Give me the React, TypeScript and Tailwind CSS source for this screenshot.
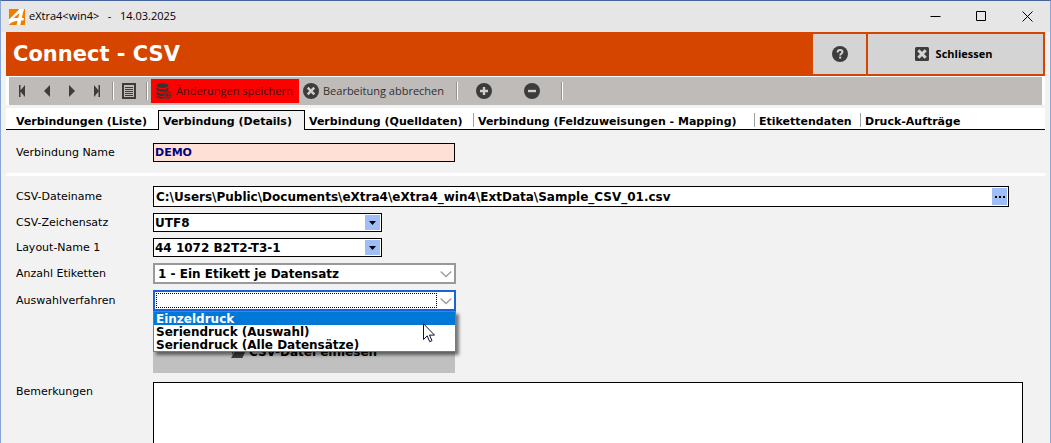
import React, { useState } from 'react';

type ToolButtonProps = {
  label: string;
  className?: string;
  children: React.ReactNode;
};

type FormRowProps = {
  id: string;
  label: string;
  className?: string;
  children: React.ReactNode;
};

const TABS = [
  { name: 'Verbindungen (Liste)', width: 'w-[152px] pl-[10px]' },
  { name: 'Verbindung (Details)', width: 'w-[147px] pl-1' },
  { name: 'Verbindung (Quelldaten)', width: 'w-[169px] pl-1' },
  { name: 'Verbindung (Feldzuweisungen - Mapping)', width: 'w-[281px] pl-1' },
  { name: 'Etikettendaten', width: 'w-[106px] pl-1' },
  { name: 'Druck-Aufträge', width: 'w-[110px] pl-1' },
];

const METHODS = ['Einzeldruck', 'Seriendruck (Auswahl)', 'Seriendruck (Alle Datensätze)'];

// Toolbar pieces
const ToolButton: React.FC<ToolButtonProps> = ({ label, className = '', children }) => (
  <button type="button" aria-label={label} className={`flex h-6 items-center justify-center ${className}`}>
    {children}
  </button>
);

const Separator = () => <div className="h-[18px] w-[2px] border-l border-r border-l-[#969290] border-r-white" />;

const RoundIcon: React.FC<{ d: string }> = ({ d }) => (
  <svg className="h-4 w-4 shrink-0" viewBox="0 0 16 16" fill="none">
    <circle cx="8" cy="8" r="8" fill="#3c3c3c" />
    <path d={d} stroke="#d0cdcb" strokeWidth="2.4" />
  </svg>
);

const DatabaseIcon = () => (
  <svg className="h-4 w-4 shrink-0" viewBox="0 0 16 16" fill="#3c3030">
    <ellipse cx="6.5" cy="2.6" rx="6" ry="2.4" />
    <path d="M.5 4.2c1.2 1.5 3.5 2 6 2s4.8-.5 6-2v2.4c-.6 1.5-3 2.4-6 2.4s-5.4-.9-6-2.4z" />
    <path d="M.5 8.4c1.2 1.3 3.3 1.8 6 1.8h1.3a5 5 0 0 0-.6 2.9c-3.7.1-6.3-.8-6.7-2.3z" />
    <path d="M.5 12.2c1.2 1 3.7 1.7 6.8 1.6.2.7.5 1.3 1 1.8-4.2.5-7.5-.5-7.8-2z" />
    <circle cx="11.5" cy="12" r="3.5" fill="#f00000" stroke="#3c3030" />
    <path d="M11.5 9.9v4.2M9.4 12h4.2" stroke="#3c3030" strokeWidth="1.2" />
  </svg>
);

const Chevron = () => (
  <svg className="pointer-events-none absolute right-[2px] top-[5px] h-2 w-3" viewBox="0 0 12 8" fill="none">
    <path d="M.7 1.5 6 6.5 11.3 1.5" stroke="#9a9a9a" strokeWidth="1.3" />
  </svg>
);

const ArrowBox = () => (
  <span className="pointer-events-none absolute right-px top-px flex h-[15px] w-[15px] items-center justify-center bg-[#9fbef7]">
    <svg className="h-1 w-[7px]" viewBox="0 0 7 4">
      <path d="M0 0h7L3.5 4z" />
    </svg>
  </span>
);

const FormRow: React.FC<FormRowProps> = ({ id, label, className = 'items-center', children }) => (
  <div className={`flex ${className}`}>
    <label htmlFor={id} className="w-[137px] shrink-0 leading-[14px]">
      {label}
    </label>
    {children}
  </div>
);

const TitleBar = () => (
  <div className="flex h-[31px] items-center bg-[#e6e6e6] pl-2 font-['Open_Sans','Noto_Sans',sans-serif] text-[11px]">
    <svg className="h-4 w-4" viewBox="0 0 16 16">
      <path d="M0 0h16v16H0z" fill="#f07d00" />
      <path
        d="M10.5 0H15l-2.2 9H15l-.6 2.6h-2.2L11.2 16H7.5l1-4.2C5 12 2.5 13.5 0 15.5v-5zM9.2 9l1.3-5L4.6 9z"
        fill="#fff"
        fillRule="evenodd"
      />
    </svg>
    <span className="ml-1 flex-1 whitespace-pre">{'eXtra4<win4>   -   14.03.2025'}</span>
    <button type="button" aria-label="Minimieren" className="flex h-full w-[46px] items-center justify-center">
      <svg className="h-[11px] w-[11px]" viewBox="0 0 11 11">
        <path d="M.5 5.5h10" stroke="#000" />
      </svg>
    </button>
    <button type="button" aria-label="Maximieren" className="flex h-full w-[46px] items-center justify-center">
      <svg className="h-[11px] w-[11px]" viewBox="0 0 11 11">
        <path d="M.5.5h9v9h-9z" fill="none" stroke="#000" />
      </svg>
    </button>
    <button type="button" aria-label="Fenster schliessen" className="flex h-full w-[46px] items-center justify-center">
      <svg className="h-[11px] w-[11px]" viewBox="0 0 11 11">
        <path d="m.5.5 10 10m0-10-10 10" stroke="#000" />
      </svg>
    </button>
  </div>
);

const Header = () => (
  <header className="flex h-11 gap-[2px] bg-[#d64500] p-[2px] pl-[7px]">
    <h1 className="flex-1 text-[21px] font-bold leading-[40px] text-white">Connect - CSV</h1>
    <button type="button" aria-label="Hilfe" className="flex w-[53px] items-center justify-center bg-[#d4d4d4]">
      <svg className="h-4 w-4" viewBox="0 0 16 16" fill="none">
        <circle cx="8" cy="8" r="8" fill="#3c3c3c" />
        <path d="M5.6 6.4C5.6 4.8 6.6 4 8 4s2.5.8 2.5 2.1C10.5 7.6 8.2 7.7 8.2 9.6" stroke="#d4d4d4" strokeWidth="1.9" />
        <path d="M7.2 10.6h2v2h-2z" fill="#d4d4d4" />
      </svg>
    </button>
    <button
      type="button"
      className="flex w-[175px] items-center justify-center gap-[7px] bg-[#d4d4d4] pr-1 font-['Open_Sans','Noto_Sans',sans-serif] text-[11px] font-bold"
    >
      <svg className="h-[14px] w-[14px]" viewBox="0 0 14 14">
        <rect width="14" height="14" rx="1.5" fill="#3c3c3c" />
        <path d="m3.3 3.3 7.4 7.4m0-7.4-7.4 7.4" stroke="#d4d4d4" strokeWidth="3" />
      </svg>
      Schliessen
    </button>
  </header>
);

const Toolbar = () => (
  <div className="border-x-[3px] border-t border-white">
    <div className="flex h-7 items-center bg-[#bfbbb8] font-['Open_Sans','Noto_Sans',sans-serif] text-[11px] text-[#303030]">
      <ToolButton label="Erster Datensatz" className="w-[25px]">
        <svg className="h-3 w-2" viewBox="0 0 8 12" fill="#3c3c3c">
          <path d="M1 0h1.5v12H1zM7 0v12L2 6z" />
        </svg>
      </ToolButton>
      <ToolButton label="Vorheriger Datensatz" className="w-[25px]">
        <svg className="h-3 w-2" viewBox="0 0 8 12" fill="#3c3c3c">
          <path d="M7 0v12L1 6z" />
        </svg>
      </ToolButton>
      <ToolButton label="Nächster Datensatz" className="w-[25px]">
        <svg className="h-3 w-2" viewBox="0 0 8 12" fill="#3c3c3c">
          <path d="M1 0v12l6-6z" />
        </svg>
      </ToolButton>
      <ToolButton label="Letzter Datensatz" className="w-[25px]">
        <svg className="h-3 w-2" viewBox="0 0 8 12" fill="#3c3c3c">
          <path d="M5.5 0H7v12H5.500zM1 0v12l5-6z" />
        </svg>
      </ToolButton>
      <div className="w-[3px]" />
      <Separator />
      <ToolButton label="Liste" className="mr-[2px] w-[30px]">
        <svg className="h-4 w-[14px]" viewBox="0 0 14 16" fill="none" stroke="#3c3c3c">
          <path d="M1 1h12v14H1z" strokeWidth="2" />
          <path d="M3 4.5h8M3 6.5h8M3 8.5h8M3 10.5h8M3 12.5h8" />
        </svg>
      </ToolButton>
      <Separator />
      <button type="button" className="ml-[3px] flex h-6 w-[148px] items-center gap-1 bg-[#ff0000] pl-[5px] whitespace-nowrap text-[#401414]">
        <DatabaseIcon />
        Änderungen speichern
      </button>
      <button type="button" className="flex h-6 w-[157px] items-center gap-1 pl-1 whitespace-nowrap">
        <RoundIcon d="m4.7 4.7 6.6 6.6m0-6.6-6.6 6.6" />
        Bearbeitung abbrechen
      </button>
      <Separator />
      <ToolButton label="Hinzufügen" className="ml-[2px] w-12">
        <RoundIcon d="M8 4v8M4 8h8" />
      </ToolButton>
      <ToolButton label="Entfernen" className="mr-[5px] w-12">
        <RoundIcon d="M4 8h8" />
      </ToolButton>
      <Separator />
    </div>
  </div>
);

const App: React.FC = () => {
  const [activeTab, setActiveTab] = useState(1);
  const [name, setName] = useState('DEMO');
  const [fileName, setFileName] = useState('C:\\Users\\Public\\Documents\\eXtra4\\eXtra4_win4\\ExtData\\Sample_CSV_01.csv');
  const [method, setMethod] = useState('');
  const [listOpen, setListOpen] = useState(true);
  const [highlighted, setHighlighted] = useState(0);

  const chooseMethod = (value: string) => {
    setMethod(value);
    setListOpen(false);
  };

  return (
    <div className="h-screen overflow-hidden border-x border-t border-x-[#8aa6d9] border-t-[#46659c] bg-[#f2f2f2] font-['Verdana','DejaVu_Sans',sans-serif] text-[11px] text-black">
      <TitleBar />
      <div className="mx-[5px]">
        <Header />
        <Toolbar />

        <div role="tablist" className="mt-[3px] flex h-[22px] items-end bg-white font-bold">
          {TABS.map((tab, i) => (
            <button
              key={tab.name}
              type="button"
              role="tab"
              aria-selected={i === activeTab}
              onClick={() => setActiveTab(i)}
              className={`h-5 shrink-0 whitespace-nowrap pt-1 text-left leading-[14px] ${tab.width} ${i === activeTab
                ? 'border-x border-t border-black bg-[#f2f2f2] pb-px'
                : 'relative border-b border-black'
                }`}
            >
              {tab.name}
              {i > activeTab && i < TABS.length - 1 && (
                <span className="absolute right-0 top-[3px] h-[14px] w-px bg-[#a0a0a0]" />
              )}
            </button>
          ))}
          <div className="h-5 flex-1 border-b border-black" />
        </div>

        <div className="pl-[10px] pt-[13px]">
          <FormRow id="name" label="Verbindung Name">
            <input
              id="name"
              value={name}
              onChange={(e) => setName(e.target.value)}
              className="h-[19px] w-[302px] border border-black bg-[#ffe0d6] px-px font-bold text-[#000080]"
            />
          </FormRow>
        </div>
        <div className="mt-[11px] h-[3px] bg-white" />

        <div className="pl-[10px] pt-[10px]">
          <FormRow id="file" label="CSV-Dateiname" className="items-center pr-[36px]">
            <div className="flex h-[21px] flex-1 border border-black bg-white p-px">
              <input
                id="file"
                value={fileName}
                onChange={(e) => setFileName(e.target.value)}
                className="min-w-0 flex-1 px-px pt-px text-xs font-bold"
              />
              <button type="button" aria-label="Datei auswählen" className="flex w-[15px] items-center justify-center bg-[#9fbef7]">
                <svg className="h-[2px] w-[10px]" viewBox="0 0 10 2">
                  <path d="M0 0h2v2H0zM4 0h2v2H4zM8 0h2v2H8z" />
                </svg>
              </button>
            </div>
          </FormRow>
          <FormRow id="charset" label="CSV-Zeichensatz" className="mt-[6px] items-center">
            <div className="relative h-[19px] w-[229px] border border-black bg-white">
              <select id="charset" className="block h-full w-full appearance-none px-px text-xs font-bold">
                <option>UTF8</option>
              </select>
              <ArrowBox />
            </div>
          </FormRow>
          <FormRow id="layout" label="Layout-Name 1" className="mt-[6px] items-center">
            <div className="relative h-[19px] w-[229px] border border-black bg-white">
              <select id="layout" className="block h-full w-full appearance-none px-px text-xs font-bold">
                <option>44 1072 B2T2-T3-1</option>
              </select>
              <ArrowBox />
            </div>
          </FormRow>
          <FormRow id="count" label="Anzahl Etiketten" className="mt-[6px] items-center">
            <div className="relative h-[21px] w-[303px] border-2 border-[#999999] bg-white">
              <select id="count" className="block h-full w-full appearance-none px-[3px] text-xs font-bold">
                <option>1 - Ein Etikett je Datensatz</option>
              </select>
              <Chevron />
            </div>
          </FormRow>
          <FormRow id="method" label="Auswahlverfahren" className="mt-[6px] items-center">
            <div className="relative h-[21px] w-[303px] border-2 border-[#1a62d8] bg-white">
              <select
                id="method"
                value={method}
                onMouseDown={(e) => {
                  e.preventDefault();
                  setListOpen(!listOpen);
                }}
                onChange={(e) => setMethod(e.target.value)}
                className="ml-px mt-px block h-[15px] w-[281px] appearance-none border border-dotted border-black px-px font-bold"
              >
                <option value=""></option>
                {METHODS.map((m) => (
                  <option key={m}>{m}</option>
                ))}
              </select>
              <Chevron />
              {listOpen && (
                <ul
                  role="listbox"
                  aria-label="Auswahlverfahren"
                  className="absolute -left-[2px] top-[19px] z-10 w-[303px] border border-[#7a7a7a] bg-white text-xs font-bold leading-[13px] shadow-[3px_3px_3px_rgba(0,0,0,0.5)]"
                >
                  {METHODS.map((m, i) => (
                    <li
                      key={m}
                      role="option"
                      aria-selected={i === highlighted}
                      onMouseEnter={() => setHighlighted(i)}
                      onClick={() => chooseMethod(m)}
                      className={`h-[13px] px-[2px] pt-px ${i === highlighted ? 'bg-[#0078d7] text-white' : ''}`}
                    >
                      {m}
                    </li>
                  ))}
                </ul>
              )}
              {listOpen && (
                <svg className="pointer-events-none absolute left-[268px] top-[31px] z-20 h-5 w-3" viewBox="0 0 12 20">
                  <path d="M.5.7v15.8l3.7-3.6 2.5 5.8 2.3-1-2.5-5.6h5z" fill="#fff" stroke="#101030" />
                </svg>
              )}
            </div>
          </FormRow>
          <button
            type="button"
            className="ml-[137px] mt-5 flex h-[42px] w-[302px] items-center justify-center gap-1 bg-[#c0c0c0] text-xs font-bold"
          >
            <svg className="h-3 w-[14px]" viewBox="0 0 14 12" fill="#3c3c3c">
              <path d="M1 1h4l1 1.5h5V5H3L1 9zM3.5 6H14l-2.5 6H0z" />
            </svg>
            CSV-Datei einlesen
          </button>
          <div className="mt-[9px] flex pr-[22px]">
            <label htmlFor="notes" className="w-[137px] shrink-0 pt-[3px] leading-[14px]">
              Bemerkungen
            </label>
            <textarea id="notes" className="block h-28 flex-1 resize-none border border-black bg-white p-1" />
          </div>
        </div>
      </div>
    </div>
  );
};

export default App;
